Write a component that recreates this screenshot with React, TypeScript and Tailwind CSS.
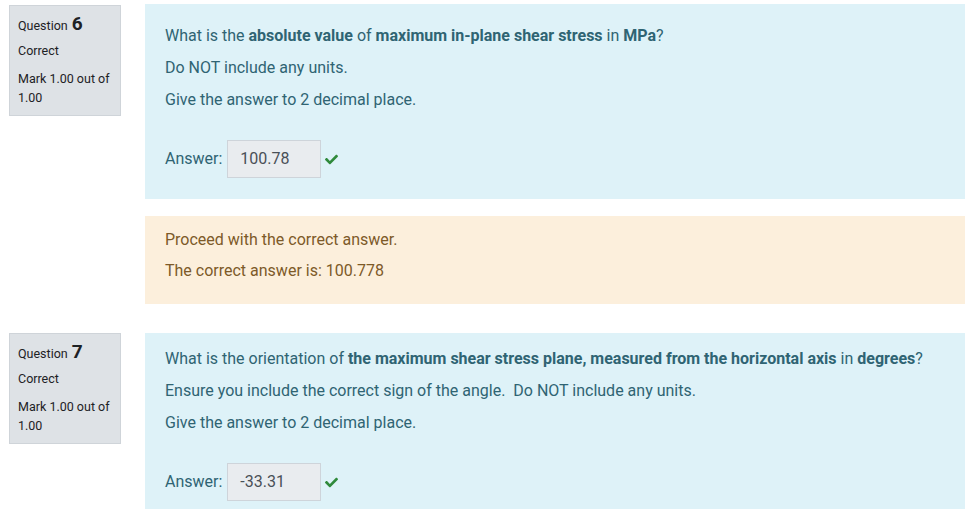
import React from "react";

type Part = { t: string; b?: boolean };

type Question = {
  num: number;
  lines: Part[][];
  answer: string;
  feedback?: string[];
};

const questions: Question[] = [
  {
    num: 6,
    lines: [
      [
        { t: "What is the " },
        { t: "absolute value", b: true },
        { t: " of " },
        { t: "maximum in-plane shear stress", b: true },
        { t: " in " },
        { t: "MPa", b: true },
        { t: "?" },
      ],
      [{ t: "Do NOT include any units." }],
      [{ t: "Give the answer to 2 decimal place." }],
    ],
    answer: "100.78",
    feedback: ["Proceed with the correct answer.", "The correct answer is: 100.778"],
  },
  {
    num: 7,
    lines: [
      [
        { t: "What is the orientation of " },
        { t: "the maximum shear stress plane, measured from the horizontal axis", b: true },
        { t: " in " },
        { t: "degrees", b: true },
        { t: "?" },
      ],
      [{ t: "Ensure you include the correct sign of the angle.\u00a0 Do NOT include any units." }],
      [{ t: "Give the answer to 2 decimal place." }],
    ],
    answer: "-33.31",
  },
];

function Check() {
  return (
    <svg width="15" height="13" viewBox="0 0 512 512" className="ml-[3px] fill-[#2f8a3b]">
      <path d="M173.9 439.4l-166.4-166.4c-10-10-10-26.2 0-36.2l36.2-36.2c10-10 26.2-10 36.2 0L192 312.7 432.1 72.6c10-10 26.2-10 36.2 0l36.2 36.2c10 10 10 26.2 0 36.2l-294.4 294.4c-10 10-26.2 10-36.2 0z" />
    </svg>
  );
}

function InfoBox({ num, first }: { num: number; first: boolean }) {
  return (
    <div
      className={
        (first ? "mt-[1px] " : "") +
        "ml-[9px] h-[111px] w-[112px] shrink-0 border border-[#cfd4d9] bg-[#dee2e6] px-2 pt-[6px] text-[12.5px] text-[#1d2125]"
      }
    >
      <div className="flex items-baseline">
        <span>Question</span>
        <span className="ml-1 text-[19px] font-bold leading-[24px]">{num}</span>
      </div>
      <div className="mt-[5px] leading-[19px]">Correct</div>
      <div className="mt-[9px] leading-[19px]">Mark 1.00 out of 1.00</div>
    </div>
  );
}

function QuestionBlock({ q, first }: { q: Question; first: boolean }) {
  return (
    <div className="flex">
      <InfoBox num={q.num} first={first} />
      <div className="ml-6 flex-1">
        <div
          className={
            first
              ? "bg-[#def2f8] px-5 pb-[21px] pt-[21px] text-[#2f6473]"
              : "bg-[#def2f8] px-5 pb-2 pt-[15px] text-[#2f6473]"
          }
        >
          {q.lines.map((line, i) => (
            <p key={i} className="mb-[10px] leading-[22px]">
              {line.map((p, j) =>
                p.b ? (
                  <strong key={j} className="font-bold">
                    {p.t}
                  </strong>
                ) : (
                  <span key={j}>{p.t}</span>
                )
              )}
            </p>
          ))}
          <div className="mt-[29px] flex items-center">
            <span className="mr-[5px]">Answer:</span>
            <div className="flex h-[38px] w-[94px] items-center border border-[#ced4da] bg-[#e9ecef] px-3 text-[#495057]">
              {q.answer}
            </div>
            <Check />
          </div>
        </div>
        {q.feedback && (
          <div className="mt-[17px] bg-[#fcefdc] px-5 pb-[13px] pt-[13px] text-[#7d5a29]">
            {q.feedback.map((f, i) => (
              <p key={i} className="mb-[9px] leading-[22px]">
                {f}
              </p>
            ))}
          </div>
        )}
      </div>
    </div>
  );
}

export default function App() {
  return (
    <div className="h-[509px] w-[965px] overflow-hidden bg-white pt-1 font-['Roboto',sans-serif] text-[16px]">
      <div className="flex flex-col gap-[29px]">
        {questions.map((q, i) => (
          <QuestionBlock key={q.num} q={q} first={i === 0} />
        ))}
      </div>
    </div>
  );
}
